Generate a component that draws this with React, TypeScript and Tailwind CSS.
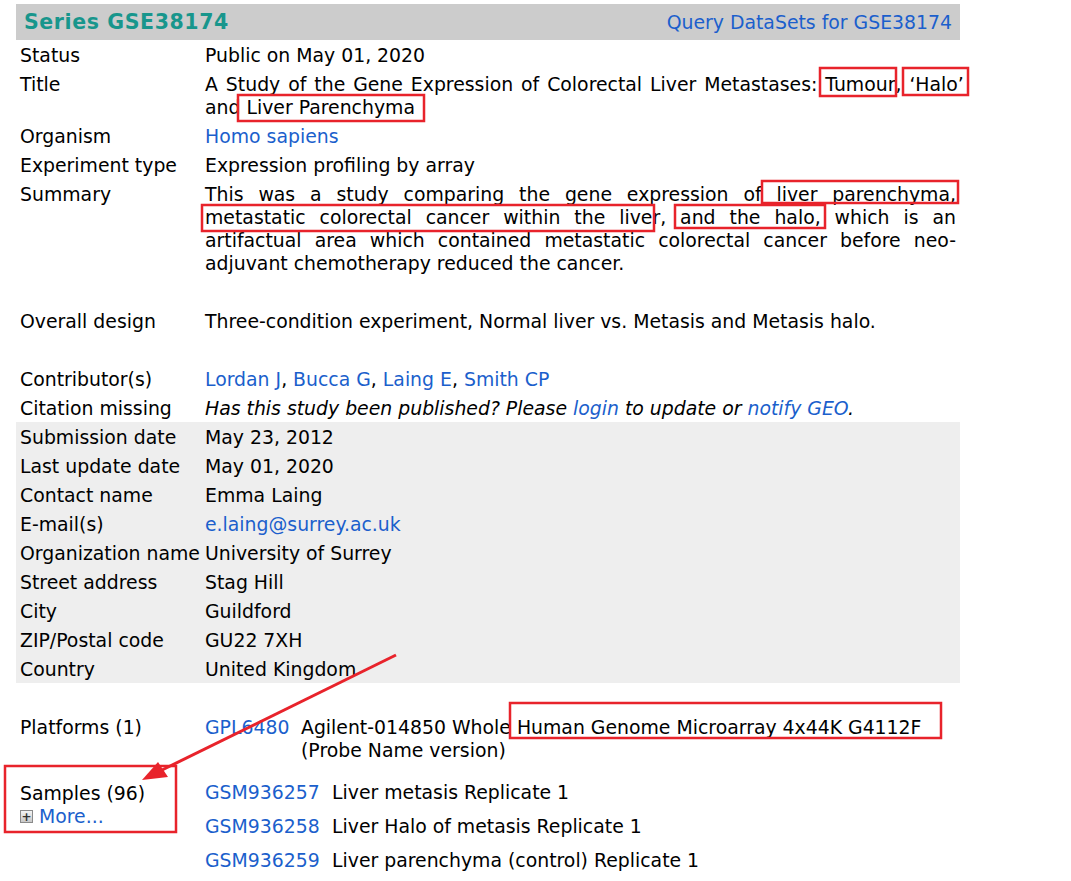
import React from "react";

const BLUE = "text-[#1b5fcc]";

function Row({
  label,
  children,
  className = "",
}: {
  label?: React.ReactNode;
  children?: React.ReactNode;
  className?: string;
}) {
  return (
    <div className={`flex ${className}`}>
      <div className="w-[189px] shrink-0 pl-[4px] pt-[4px] pb-[2px]">{label}</div>
      <div className="w-[755px] pr-[4px] pt-[4px] pb-[2px]">{children}</div>
    </div>
  );
}

function Empty() {
  return <div className="h-[29px]" />;
}

function J({ children, className = "" }: { children: React.ReactNode; className?: string }) {
  return <div className={`text-justify [text-align-last:justify] whitespace-nowrap ${className}`}>{children}</div>;
}

export default function App() {
  return (
    <div
      className="relative w-[1071px] min-h-[881px] bg-white text-black text-[18.85px] leading-[23px]"
      style={{ fontFamily: '"DejaVu Sans", Verdana, sans-serif' }}
    >
      <div className="pt-[4px] pl-[16px]">
        <div className="w-[944px] h-[36px] bg-[#cccccc] flex items-center justify-between pl-[8px] pr-[8px]">
          <span className="font-bold text-[#18968c] text-[20.5px] tracking-[0.6px] pt-[1px]">Series GSE38174</span>
          <span className={`${BLUE} pt-[1px]`}>Query DataSets for GSE38174</span>
        </div>

        <div className="w-[944px]">
          <Row label="Status">Public on May 01, 2020</Row>
          <Row label="Title">
            <div className="flex justify-between whitespace-nowrap mr-[-8px]">
              {"A Study of the Gene Expression of Colorectal Liver Metastases: Tumour, \u2018Halo\u2019"
                .split(" ")
                .map((w, i) => (
                  <span key={i}>{w}</span>
                ))}
            </div>
            <div>and Liver Parenchyma</div>
          </Row>
          <Row label="Organism">
            <span className={BLUE}>Homo sapiens</span>
          </Row>
          <Row label="Experiment type">Expression profiling by array</Row>
          <Row label="Summary">
            <J>This was a study comparing the gene expression of liver parenchyma,</J>
            <J>metastatic colorectal cancer within the liver, and the halo, which is an</J>
            <J>artifactual area which contained metastatic colorectal cancer before neo-</J>
            <div>adjuvant chemotherapy reduced the cancer.</div>
          </Row>
          <Empty />
          <Row label="Overall design">
            Three-condition experiment, Normal liver vs. Metasis and Metasis halo.
          </Row>
          <Empty />
          <Row label="Contributor(s)">
            <span className={BLUE}>Lordan J</span>, <span className={BLUE}>Bucca G</span>,{" "}
            <span className={BLUE}>Laing E</span>, <span className={BLUE}>Smith CP</span>
          </Row>
          <Row label="Citation missing">
            <i>
              Has this study been published? Please <span className={BLUE}>login</span> to update or{" "}
              <span className={BLUE}>notify GEO</span>.
            </i>
          </Row>
          <div className="bg-[#eeeeee]">
            <Row label="Submission date">May 23, 2012</Row>
            <Row label="Last update date">May 01, 2020</Row>
            <Row label="Contact name">Emma Laing</Row>
            <Row label="E-mail(s)">
              <span className={BLUE}>e.laing@surrey.ac.uk</span>
            </Row>
            <Row label="Organization name">University of Surrey</Row>
            <Row label="Street address">Stag Hill</Row>
            <Row label="City">Guildford</Row>
            <Row label="ZIP/Postal code">GU22 7XH</Row>
            <Row label="Country">United Kingdom</Row>
          </div>
          <Empty />
          <Row label="Platforms (1)">
            <div className="flex">
              <span className={`${BLUE} w-[96px] shrink-0`}>GPL6480</span>
              <div>
                <div className="whitespace-nowrap">Agilent-014850 Whole Human Genome Microarray 4x44K G4112F</div>
                <div>(Probe Name version)</div>
              </div>
            </div>
          </Row>
          <div className="flex pt-[14px]">
            <div className="w-[189px] shrink-0 pl-[4px] pt-[4px]">
              <div>Samples (96)</div>
              <div className="flex items-center gap-[6px]">
                <span className="w-[13px] h-[13px] border border-[#8a8a8a] bg-gradient-to-b from-[#f4f4f4] to-[#c8c8c8] flex items-center justify-center text-[12px] leading-none text-[#333] font-bold">
                  +
                </span>
                <span className={BLUE}>More...</span>
              </div>
            </div>
            <div className="flex flex-col gap-[11px] pt-[3px]">
              {[
                ["GSM936257", "Liver metasis Replicate 1"],
                ["GSM936258", "Liver Halo of metasis Replicate 1"],
                ["GSM936259", "Liver parenchyma (control) Replicate 1"],
              ].map(([id, d]) => (
                <div key={id} className="flex">
                  <span className={`${BLUE} w-[127px] shrink-0`}>{id}</span>
                  <span>{d}</span>
                </div>
              ))}
            </div>
          </div>
        </div>
      </div>

      <svg
        className="absolute left-0 top-0 pointer-events-none"
        width="1071"
        height="881"
        viewBox="0 0 1071 881"
      >
        <g fill="none" stroke="#e8232b" strokeWidth="2.5">
          <rect x="820" y="68" width="76" height="28" />
          <rect x="903" y="68" width="65" height="27" />
          <rect x="238" y="95" width="186" height="26" />
          <rect x="762" y="181" width="196" height="22" />
          <rect x="202" y="205" width="452" height="26" />
          <rect x="675" y="205" width="150" height="23" />
          <rect x="510" y="703" width="431" height="35" />
          <rect x="5" y="766" width="171" height="66" />
        </g>
        <line x1="396" y1="655" x2="160" y2="771" stroke="#e8232b" strokeWidth="3" />
        <polygon points="142,780 158,762 168,777" fill="#e8232b" />
      </svg>
    </div>
  );
}
